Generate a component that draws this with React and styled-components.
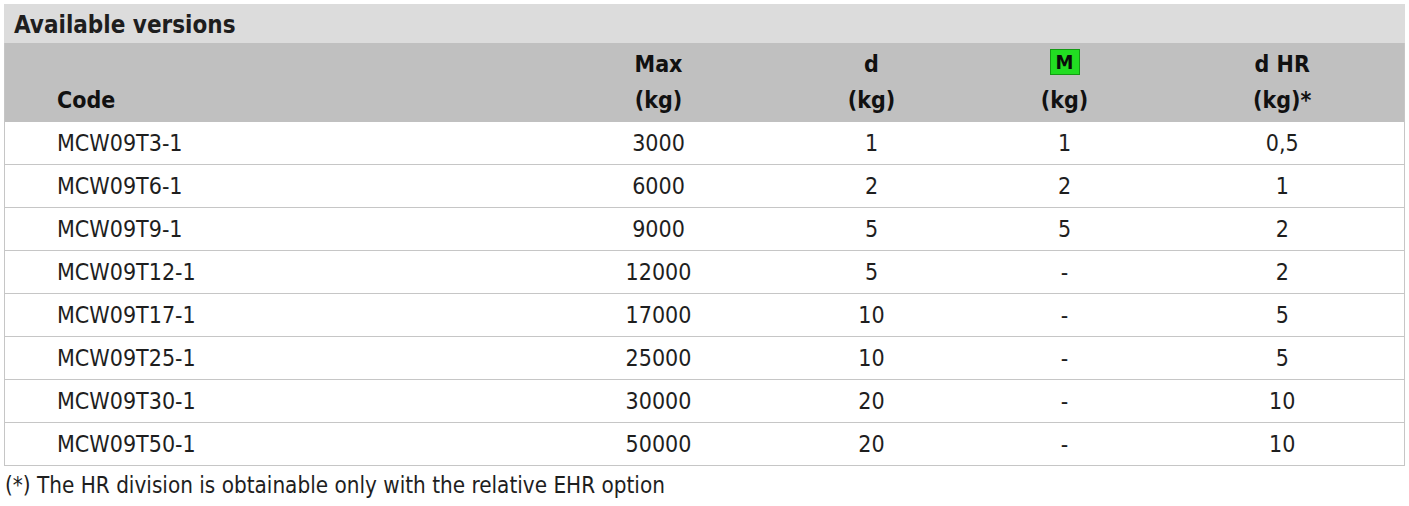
import React from "react";
import styled, { createGlobalStyle } from "styled-components";

const rows = [
  ["MCW09T3-1", "3000", "1", "1", "0,5"],
  ["MCW09T6-1", "6000", "2", "2", "1"],
  ["MCW09T9-1", "9000", "5", "5", "2"],
  ["MCW09T12-1", "12000", "5", "-", "2"],
  ["MCW09T17-1", "17000", "10", "-", "5"],
  ["MCW09T25-1", "25000", "10", "-", "5"],
  ["MCW09T30-1", "30000", "20", "-", "10"],
  ["MCW09T50-1", "50000", "20", "-", "10"],
];

const App = () => {
  return (
    <React.Fragment>
      <GlobalStyle />
      <Page>
        <Title>Available versions</Title>
        <Table>
          <colgroup>
            <col style={{ width: "538px" }} />
            <col style={{ width: "232px" }} />
            <col style={{ width: "194px" }} />
            <col style={{ width: "192px" }} />
            <col />
          </colgroup>
          <thead>
            <tr>
              <Th left>Code</Th>
              <Th>
                Max
                <br />
                (kg)
              </Th>
              <Th>
                d
                <br />
                (kg)
              </Th>
              <Th>
                <Badge>M</Badge>
                <br />
                (kg)
              </Th>
              <Th>
                d HR
                <br />
                (kg)*
              </Th>
            </tr>
          </thead>
          <tbody>
            {rows.map((r) => (
              <tr key={r[0]}>
                {r.map((v, i) => (
                  <Td key={i} left={i === 0}>
                    {v}
                  </Td>
                ))}
              </tr>
            ))}
          </tbody>
        </Table>
        <Note>(*) The HR division is obtainable only with the relative EHR option</Note>
      </Page>
    </React.Fragment>
  );
};

const GlobalStyle = createGlobalStyle`
  body {
    margin: 0;
    background: #fff;
    font-family: "DejaVu Sans Condensed", "DejaVu Sans", sans-serif;
    font-stretch: condensed;
    color: #1e1e1e;
  }
`;

const Page = styled.div`
  padding: 4px 0 0 4px;
  width: 1401px;
`;

const Title = styled.div`
  height: 39px;
  background-color: #dcdcdc;
  padding-left: 10px;
  font-size: 24px;
  font-weight: bold;
  line-height: 43px;
  color: #1e1e1e;
`;

const Table = styled.table`
  width: 1401px;
  border-collapse: collapse;
  table-layout: fixed;
  border-left: 1px solid #c6c6c6;
  border-right: 1px solid #c6c6c6;
  border-bottom: 1px solid #c6c6c6;
`;

const Th = styled.th`
  height: 79px;
  padding: 0 ${(p) => (p.left ? "0 0 52px" : "0")};
  padding-bottom: 4px;
  box-sizing: border-box;
  background-color: #c0c0c0;
  vertical-align: bottom;
  text-align: ${(p) => (p.left ? "left" : "center")};
  font-size: 23px;
  font-weight: bold;
  line-height: 36px;
  color: #111;
`;

const Badge = styled.span`
  display: inline-block;
  width: 28px;
  height: 24px;
  line-height: 25px;
  background-color: #22dd22;
  border: 1px solid #139a13;
  color: #0a0a0a;
  font-size: 20px;
  font-weight: 900;
  vertical-align: middle;
  margin-top: -8px;
`;

const Td = styled.td`
  height: 42px;
  padding: 0 ${(p) => (p.left ? "0 0 52px" : "0")};
  border-bottom: 1px solid #c6c6c6;
  text-align: ${(p) => (p.left ? "left" : "center")};
  font-size: 23px;
  color: #1e1e1e;
`;

const Note = styled.div`
  padding: 5px 0 0 1px;
  font-size: 22.3px;
  line-height: 28px;
  color: #1e1e1e;
`;

export default App;
